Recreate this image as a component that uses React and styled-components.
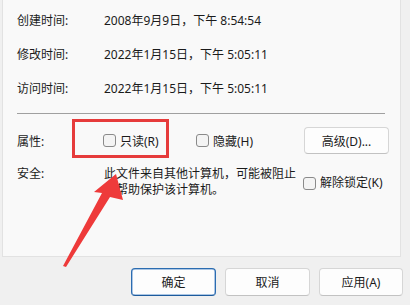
import styled, { createGlobalStyle } from 'styled-components'

const GlobalStyle = createGlobalStyle`
  html, body {
    margin: 0;
    padding: 0;
    background: #f0f0f0;
  }
  body {
    font-family: 'Noto Sans', 'Noto Sans CJK SC', sans-serif;
    font-size: 12px;
    color: #1b1b1b;
  }
`

const Page = styled.div`
  position: relative;
  width: 410px;
  height: 305px;
  overflow: hidden;
`

const Panel = styled.div`
  margin-left: 2px;
  width: 399px;
  height: 257px;
  box-sizing: border-box;
  background: #f9f9f9;
  border: 1px solid #e2e2e2;
  border-top: none;
  padding: 3px 15px 0 14px;
`

const InfoRow = styled.div`
  display: grid;
  grid-template-columns: 87px 1fr;
  align-items: center;
  height: 34px;
  white-space: nowrap;
`

const Separator = styled.div`
  height: 1px;
  background: #a0a0a0;
  margin-top: 8px;
`

const AttrRow = styled.div`
  display: grid;
  grid-template-columns: 86px 93px 108px auto;
  align-items: center;
  height: 27px;
  margin-top: 13px;
`

const SecurityRow = styled.div`
  display: grid;
  grid-template-columns: 87px 199px auto;
  align-items: start;
  margin-top: 12px;
  line-height: 16px;
`

const SecurityText = styled.div`
  width: 194px;
`

const CheckLabel = styled.label`
  display: flex;
  align-items: center;
  gap: 4px;
  white-space: nowrap;
  align-self: ${(p) => (p.$middle ? 'center' : 'auto')};
  margin-top: ${(p) => (p.$middle ? '2px' : '0')};
`

const Box = styled.span`
  display: inline-block;
  width: 11px;
  height: 11px;
  border: 1px solid #8a8a8a;
  border-radius: 3px;
  background: #f4f4f4;
`

const Button = styled.button`
  font: inherit;
  color: #1b1b1b;
  width: ${(p) => p.$w || 85}px;
  height: ${(p) => p.$h || 28}px;
  border-radius: 4px;
  background: #fdfdfd;
  border: 1px solid ${(p) => (p.$primary ? '#2b6cb0' : '#d6d6d6')};
  border-bottom-color: ${(p) => (p.$primary ? '#1d5b9c' : '#c2c2c2')};
  box-shadow: ${(p) => (p.$primary ? 'inset 0 0 0 0.5px #5b8fcc' : 'none')};
  padding: 0;
`

const Footer = styled.div`
  display: flex;
  gap: 9px;
  padding-left: 131px;
  margin-top: 11px;
`

const Overlay = styled.svg`
  position: absolute;
  left: 0;
  top: 0;
  pointer-events: none;
`

const times = [
  ['创建时间:', '2008年9月9日，下午 8:54:54'],
  ['修改时间:', '2022年1月15日，下午 5:05:11'],
  ['访问时间:', '2022年1月15日，下午 5:05:11'],
]

export default function App() {
  return (
    <Page>
      <GlobalStyle />
      <Panel>
        {times.map(([k, v]) => (
          <InfoRow key={k}>
            <span>{k}</span>
            <span>{v}</span>
          </InfoRow>
        ))}
        <Separator />
        <AttrRow>
          <span>属性:</span>
          <CheckLabel>
            <Box />
            只读(R)
          </CheckLabel>
          <CheckLabel>
            <Box />
            隐藏(H)
          </CheckLabel>
          <Button $w={85} $h={27}>高级(D)...</Button>
        </AttrRow>
        <SecurityRow>
          <span>安全:</span>
          <SecurityText>此文件来自其他计算机，可能被阻止以帮助保护该计算机。</SecurityText>
          <CheckLabel $middle>
            <Box />
            解除锁定(K)
          </CheckLabel>
        </SecurityRow>
      </Panel>
      <Footer>
        <Button $primary>确定</Button>
        <Button>取消</Button>
        <Button $w={84}>应用(A)</Button>
      </Footer>
      <Overlay width="410" height="305" viewBox="0 0 410 305">
        <rect x="73.5" y="120.5" width="94" height="36" fill="none" stroke="#e63b3b" strokeWidth="3" />
        <polygon
          points="116,174 123,200 110,197 66,267 63,266 102,193 94,192"
          fill="#ee3a3a"
        />
      </Overlay>
    </Page>
  )
}
